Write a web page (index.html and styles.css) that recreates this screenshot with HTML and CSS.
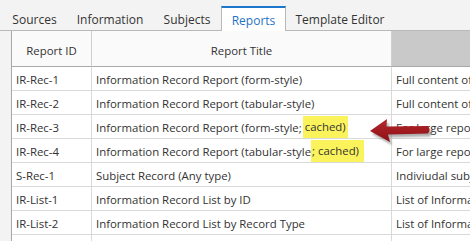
FILE: index.html
```html
<!DOCTYPE html>
<html>
<head>
<meta charset="utf-8">
<link rel="stylesheet" href="styles.css">
</head>
<body>
<div class="tabs">
  <div class="tab w1">Sources</div>
  <div class="tab w2">Information</div>
  <div class="tab w3">Subjects</div>
  <div class="tab w4 active">Reports</div>
  <div class="tab w5">Template Editor</div>
</div>
<div class="grid">
  <div class="row head">
    <div class="cell c">Report ID</div>
    <div class="cell c">Report Title</div>
    <div class="cell dark"></div>
  </div>
  <div class="row first">
    <div class="cell">IR-Rec-1</div>
    <div class="cell">Information Record Report (form-style)</div>
    <div class="cell">Full content of each Information Record</div>
  </div>
  <div class="row">
    <div class="cell">IR-Rec-2</div>
    <div class="cell">Information Record Report (tabular-style)</div>
    <div class="cell">Full content of each Information Record</div>
  </div>
  <div class="row">
    <div class="cell">IR-Rec-3</div>
    <div class="cell">Information Record Report (form-style;&nbsp;<span class="hl">cached)</span></div>
    <div class="cell">For large reports</div>
  </div>
  <div class="row">
    <div class="cell">IR-Rec-4</div>
    <div class="cell">Information Record Report (tabular-style<span class="hl b">; cached)&nbsp;</span></div>
    <div class="cell">For large reports</div>
  </div>
  <div class="row">
    <div class="cell">S-Rec-1</div>
    <div class="cell">Subject Record (Any type)</div>
    <div class="cell">Indiviudal subject record</div>
  </div>
  <div class="row">
    <div class="cell">IR-List-1</div>
    <div class="cell">Information Record List by ID</div>
    <div class="cell">List of Information Records</div>
  </div>
  <div class="row">
    <div class="cell">IR-List-2</div>
    <div class="cell">Information Record List by Record Type</div>
    <div class="cell">List of Information Records</div>
  </div>
  <div class="row">
    <div class="cell"></div>
    <div class="cell"></div>
    <div class="cell"></div>
  </div>
</div>
<svg class="arrow" viewBox="0 0 72 34" width="72" height="34">
  <defs>
    <filter id="blur" x="-20%" y="-40%" width="140%" height="180%"><feGaussianBlur stdDeviation="1.2"/></filter>
    <linearGradient id="rg" x1="0" y1="0" x2="0" y2="1">
      <stop offset="0" stop-color="#b3262b"/>
      <stop offset="1" stop-color="#8e1016"/>
    </linearGradient>
  </defs>
  <path d="M6 17 L23 5 L22.5 12.5 L64 12 Q67 15.5 64 19.5 L24 20.5 L26 28 Z" fill="#6b6b6b" opacity="0.55" transform="translate(2 3)" filter="url(#blur)"/>
  <path d="M6 17 L23 5 L22.5 12.5 L64 12 Q67 15.5 64 19.5 L24 20.5 L26 28 Z" fill="url(#rg)"/>
</svg>
</body>
</html>
```
FILE: styles.css
```css
html, body {
  margin: 0;
  padding: 0;
}
body {
  width: 470px;
  height: 241px;
  overflow: hidden;
  background: #f3f3f3;
  font-family: "Open Sans", "Noto Sans", sans-serif;
  font-size: 11.4px;
  color: #333333;
  position: relative;
}
.tabs {
  display: flex;
  align-items: flex-end;
  height: 30px;
  padding-left: 2px;
  border-bottom: 1px solid #b9b9b9;
}
.tab {
  box-sizing: border-box;
  height: 24px;
  display: flex;
  align-items: center;
  justify-content: center;
  white-space: nowrap;
  color: #333333;
  padding-top: 3px;
  font-size: 12px;
}
.w1 { width: 65px; }
.w2 { width: 86px; }
.w3 { width: 68px; }
.w4 { width: 65px; }
.w5 { width: 108px; }
.tab.active {
  background: #ffffff;
  color: #1f73c4;
  border-top: 2px solid #1c77cc;
  border-left: 1px solid #b9b9b9;
  border-right: 1px solid #b9b9b9;
  height: 25px;
  margin-bottom: -1px;
  padding-top: 1px;
}
.grid {
  margin-left: 11px;
  border-left: 1px solid #a8a8a8;
  width: 620px;
}
.row {
  display: grid;
  grid-template-columns: 80px 300px 1fr;
  height: 24px;
  background: #ffffff;
}
.cell {
  box-sizing: border-box;
  border-right: 1px solid #d9d9d9;
  border-bottom: 1px solid #d9d9d9;
  padding-left: 4px;
  padding-top: 1px;
  display: flex;
  align-items: center;
  white-space: nowrap;
  overflow: hidden;
}
.row.head {
  height: 36px;
  background: #fafafa;
}
.row.head .cell {
  border-bottom: 1px solid #a9a9a9;
  border-right-color: #cfcfcf;
  padding-top: 3px;
}
.cell.c {
  justify-content: center;
  padding-left: 0;
}
.cell.dark {
  background: #c9c9c9;
}
.hl {
  background: #fbf35c;
  padding: 3px 2px 4px 2px;
  margin-left: -2px;
}
.hl.b {
  margin-left: 0;
  padding-left: 1px;
}
.arrow {
  position: absolute;
  left: 364px;
  top: 114px;
}
```
